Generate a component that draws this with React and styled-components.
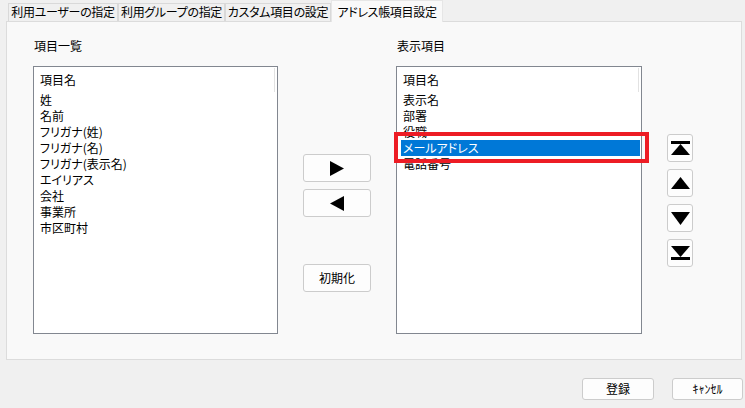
import React from "react";
import styled, { createGlobalStyle } from "styled-components";

const Global = createGlobalStyle`
  html, body { margin: 0; padding: 0; background: #f0f0f0; }
  body {
    font-family: "Noto Sans CJK JP", "Noto Sans", sans-serif;
    font-size: 12px;
    color: #000;
    font-feature-settings: "palt";
  }
`;

const Window = styled.div`
  width: 745px;
  height: 408px;
  background: #f0f0f0;
  display: flex;
  flex-direction: column;
  overflow: hidden;
`;

const TabBar = styled.div`
  height: 21px;
  display: flex;
  align-items: flex-end;
  padding-left: 8px;
  position: relative;
  z-index: 1;
`;

const Tab = styled.div`
  box-sizing: border-box;
  width: ${(p) => p.$w}px;
  height: ${(p) => (p.$active ? 22 : 18)}px;
  margin-bottom: ${(p) => (p.$active ? -1 : 0)}px;
  background: ${(p) => (p.$active ? "#f9f9f9" : "#f0f0f0")};
  border: 1px solid ${(p) => (p.$active ? "#e6e6e6" : "#d9d9d9")};
  border-bottom: none;
  display: flex;
  align-items: center;
  justify-content: center;
  line-height: 16px;
  letter-spacing: -0.3px;
  white-space: nowrap;
  padding-bottom: ${(p) => (p.$active ? 0 : 1)}px;
`;

const Panel = styled.div`
  box-sizing: border-box;
  margin-left: 6px;
  width: 736px;
  height: 339px;
  background: #f9f9f9;
  border: 1px solid #dcdcdc;
  display: grid;
  grid-template-columns: 245px 68px 246px 26px;
  column-gap: 25px;
  padding-left: 26px;
`;

const ListColumn = styled.div`
  display: flex;
  flex-direction: column;
  padding-top: 16px;
`;

const Label = styled.div`
  line-height: 16px;
  height: 16px;
  padding-left: 1px;
  margin-bottom: 12px;
`;

const ListBox = styled.div`
  position: relative;
  box-sizing: border-box;
  height: 268px;
  background: #fff;
  border: 1px solid #828790;
  display: flex;
  flex-direction: column;
`;

const ListHeader = styled.div`
  height: 24px;
  margin-top: 1px;
  margin-right: 2px;
  border-right: 1px solid #e2e2e2;
  display: flex;
  align-items: center;
  padding-left: 6px;
  line-height: 16px;
`;

const Item = styled.div`
  height: 16px;
  line-height: 16px;
  margin: 0 1px 0 4px;
  padding-left: 2px;
  white-space: nowrap;
  background: ${(p) => (p.$selected ? "#0078d7" : "transparent")};
  color: ${(p) => (p.$selected ? "#fff" : "#000")};
`;

const Highlight = styled.div`
  position: absolute;
  left: -3px;
  top: 65px;
  width: 255px;
  height: 31px;
  box-sizing: border-box;
  border: 4px solid #ed1c24;
  pointer-events: none;
`;

const MidColumn = styled.div`
  display: flex;
  flex-direction: column;
  padding-top: 132px;
  gap: 7px;
`;

const Button = styled.button`
  box-sizing: border-box;
  width: ${(p) => p.$w || 68}px;
  height: ${(p) => p.$h || 28}px;
  margin-top: ${(p) => p.$mt || 0}px;
  padding: 0;
  background: #fdfdfd;
  border: 1px solid #cccccc;
  border-radius: 3px;
  display: flex;
  align-items: center;
  justify-content: center;
  font-family: inherit;
  font-size: 12px;
  line-height: 16px;
  color: #000;
  font-feature-settings: "palt";
`;

const SideColumn = styled.div`
  display: flex;
  flex-direction: column;
  padding-top: 112px;
  gap: 7px;
`;

const Footer = styled.div`
  display: flex;
  justify-content: flex-end;
  gap: 18px;
  padding: 18px 2px 0 0;
`;

const Icon = styled.svg`
  display: block;
  fill: #000;
`;

const RightTri = () => (
  <Icon width="14" height="15" viewBox="0 0 14 15">
    <polygon points="0,0 14,7.5 0,15" />
  </Icon>
);
const LeftTri = () => (
  <Icon width="14" height="15" viewBox="0 0 14 15">
    <polygon points="14,0 0,7.5 14,15" />
  </Icon>
);
const TopIcon = () => (
  <Icon width="19" height="14" viewBox="0 0 19 14">
    <rect x="0" y="0" width="19" height="3" />
    <polygon points="9.5,3 19,14 0,14" />
  </Icon>
);
const UpIcon = () => (
  <Icon width="19" height="12" viewBox="0 0 19 12">
    <polygon points="9.5,0 19,12 0,12" />
  </Icon>
);
const DownIcon = () => (
  <Icon width="19" height="13" viewBox="0 0 19 13">
    <polygon points="0,0 19,0 9.5,13" />
  </Icon>
);
const BottomIcon = () => (
  <Icon width="19" height="14" viewBox="0 0 19 14">
    <polygon points="0,0 19,0 9.5,11" />
    <rect x="0" y="11" width="19" height="3" />
  </Icon>
);

const leftItems = [
  "姓",
  "名前",
  "フリガナ(姓)",
  "フリガナ(名)",
  "フリガナ(表示名)",
  "エイリアス",
  "会社",
  "事業所",
  "市区町村",
];

const rightItems = ["表示名", "部署", "役職", "メールアドレス", "電話番号"];

export default function App() {
  return (
    <Window>
      <Global />
      <TabBar>
        <Tab $w={110}>利用ユーザーの指定</Tab>
        <Tab $w={107}>利用グループの指定</Tab>
        <Tab $w={106}>カスタム項目の設定</Tab>
        <Tab $w={112} $active>アドレス帳項目設定</Tab>
      </TabBar>
      <Panel>
        <ListColumn>
          <Label>項目一覧</Label>
          <ListBox>
            <ListHeader>項目名</ListHeader>
            {leftItems.map((t) => (
              <Item key={t}>{t}</Item>
            ))}
          </ListBox>
        </ListColumn>
        <MidColumn>
          <Button>
            <RightTri />
          </Button>
          <Button>
            <LeftTri />
          </Button>
          <Button $mt={40}>初期化</Button>
        </MidColumn>
        <ListColumn>
          <Label>表示項目</Label>
          <ListBox>
            <ListHeader>項目名</ListHeader>
            {rightItems.map((t) => (
              <Item key={t} $selected={t === "メールアドレス"}>
                {t}
              </Item>
            ))}
            <Highlight />
          </ListBox>
        </ListColumn>
        <SideColumn>
          <Button $w={26}>
            <TopIcon />
          </Button>
          <Button $w={26}>
            <UpIcon />
          </Button>
          <Button $w={26}>
            <DownIcon />
          </Button>
          <Button $w={26}>
            <BottomIcon />
          </Button>
        </SideColumn>
      </Panel>
      <Footer>
        <Button $w={72} $h={22}>登録</Button>
        <Button $w={71} $h={22}>ｷｬﾝｾﾙ</Button>
      </Footer>
    </Window>
  );
}
